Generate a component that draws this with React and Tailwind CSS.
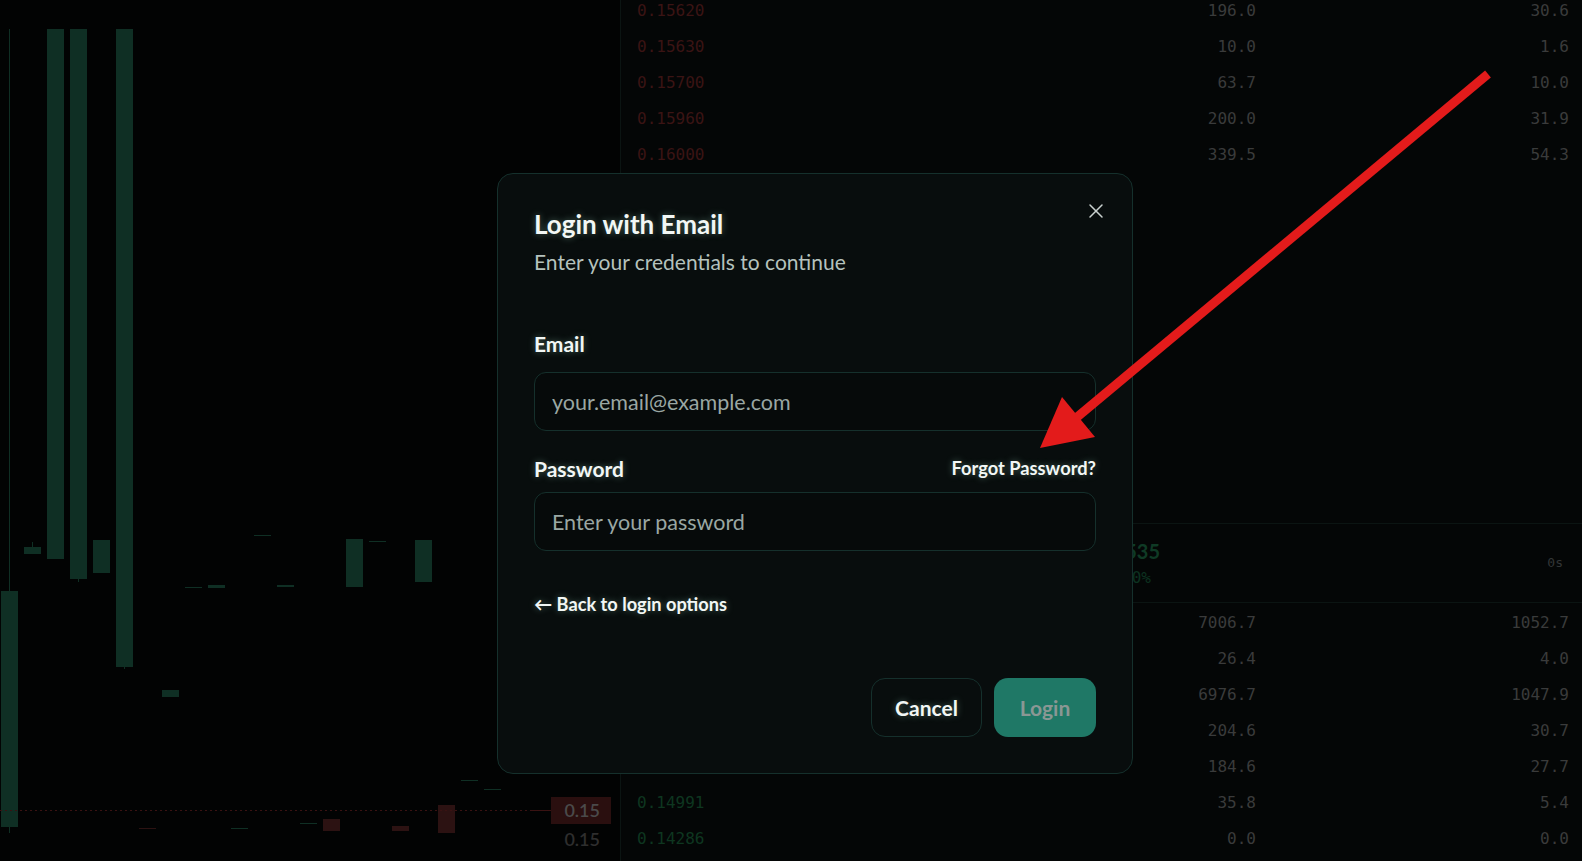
import React from 'react';
import { X } from 'lucide-react';

const asks = [
  ['0.15620', '196.0', '30.6'],
  ['0.15630', '10.0', '1.6'],
  ['0.15700', '63.7', '10.0'],
  ['0.15960', '200.0', '31.9'],
  ['0.16000', '339.5', '54.3'],
];

const bids = [
  ['0.15500', '7006.7', '1052.7'],
  ['0.15400', '26.4', '4.0'],
  ['0.15300', '6976.7', '1047.9'],
  ['0.15200', '204.6', '30.7'],
  ['0.15100', '184.6', '27.7'],
  ['0.14991', '35.8', '5.4'],
  ['0.14286', '0.0', '0.0'],
];

// [x, top, bottom, up, wickTop, wickBottom]
const candles = [
  [1, 591, 827, true, 29, 833],
  [24, 547, 554, true, 542, 554],
  [47, 29, 559, true],
  [70, 29, 579, true, 29, 582],
  [93, 540, 573, true],
  [116, 29, 667, true, 29, 669],
  [139, 828, 829, false],
  [162, 690, 697, true],
  [185, 587, 588, true],
  [208, 585, 588, true],
  [231, 828, 829, true],
  [254, 535, 536, true],
  [277, 585, 587, true],
  [300, 823, 824, true],
  [323, 819, 831, false],
  [346, 539, 587, true],
  [369, 541, 542, true],
  [392, 826, 831, false],
  [415, 540, 582, true],
  [438, 805, 833, false],
  [461, 780, 781, true],
  [484, 789, 790, true],
];

const glow = '[text-shadow:0_0_7px_rgba(190,255,225,0.35)]';

function Chart() {
  return (
    <svg width="620" height="861" viewBox="0 0 620 861" className="block">
      {candles.map(([x, t, b, up, wt, wb], i) => {
        const c = up ? '#0f2f24' : '#2c1212';
        return (
          <g key={i}>
            {wt !== undefined && <rect x={x + 8} y={wt} width="1" height={wb - wt} fill={c} />}
            <rect x={x} y={t} width="17" height={Math.max(b - t, 1)} fill={c} />
          </g>
        );
      })}
      <line x1="0" y1="810.5" x2="530" y2="810.5" stroke="#3a1212" strokeDasharray="2 3" />
      <line x1="530" y1="810.5" x2="551" y2="810.5" stroke="#3a1212" />
      <rect x="551" y="797" width="60" height="27" fill="#2a0f0f" />
      <text x="600" y="817" textAnchor="end" fill="#4a4a4a" fontSize="18" fontWeight="600" fontFamily="Lato, sans-serif">0.15</text>
      <text x="600" y="846" textAnchor="end" fill="#2e2e2e" fontSize="18" fontWeight="600" fontFamily="Lato, sans-serif">0.15</text>
    </svg>
  );
}

function BookRow({ row, priceClass }) {
  return (
    <div className="flex h-9 items-center pl-4 pr-[13px]">
      <span className={`w-[300px] ${priceClass}`}>{row[0]}</span>
      <span className="w-[319px] text-right text-[#3a3b3b]">{row[1]}</span>
      <span className="flex-1 text-right text-[#3a3b3b]">{row[2]}</span>
    </div>
  );
}

function OrderBook() {
  return (
    <div className="flex h-full flex-1 flex-col border-l border-[#0b1412] bg-[#040606] font-['DejaVu_Sans_Mono',monospace] text-[16px]">
      <div className="h-[524px] border-b border-[#0b1412]">
        <div className="-mt-[7px]">
          {asks.map((r) => (
            <BookRow key={r[0]} row={r} priceClass="text-[#3b1414]" />
          ))}
        </div>
      </div>
      <div className="flex h-[79px] items-center border-b border-[#0b1412] pl-4 pr-[19px]">
        <div className="w-[523px] text-right">
          <div className="font-['Lato',sans-serif] text-[20px] leading-6 font-bold text-[#0f3a25]">0.15535</div>
          <div className="mt-[5px] pr-[9px] text-[16px] leading-5 text-[#0c3220]">-0.40%</div>
        </div>
        <div className="flex-1 text-right text-[13px] text-[#333636]">0s</div>
      </div>
      <div className="pt-[2px]">
        {bids.map((r) => (
          <BookRow key={r[0]} row={r} priceClass="text-[#0e3620]" />
        ))}
      </div>
    </div>
  );
}

function LoginModal() {
  return (
    <div className="absolute left-[497px] top-[173px] w-[636px] rounded-2xl border border-[#15302c] bg-[#080d0d] px-9 pt-[34px] pb-9 font-['Lato',sans-serif] text-[#f2f7f5]">
      <button className="absolute right-[24px] top-[25px] text-[#c9d1cf]" aria-label="Close">
        <X size={24} strokeWidth={1.5} />
      </button>
      <h2 className={`text-[26px] leading-8 font-bold ${glow}`}>Login with Email</h2>
      <p className="mt-2 text-[21px] leading-7 text-[#b5c2bd]">Enter your credentials to continue</p>

      <label className={`mt-[54px] block text-[21px] leading-7 font-bold ${glow}`}>Email</label>
      <input
        type="email"
        placeholder="your.email@example.com"
        className="mt-[14px] block h-[59px] w-full rounded-xl border border-[#15302c] bg-[#060a0a] px-[17px] text-[21.5px] text-white outline-none placeholder:text-[#9aa7a3]"
      />

      <div className="mt-6 flex h-7 items-center justify-between">
        <label className={`text-[21px] font-bold ${glow}`}>Password</label>
        <button className={`text-[18.3px] font-bold ${glow}`}>Forgot Password?</button>
      </div>
      <input
        type="password"
        placeholder="Enter your password"
        className="mt-[9px] block h-[59px] w-full rounded-xl border border-[#15302c] bg-[#060a0a] px-[17px] text-[21.5px] text-white outline-none placeholder:text-[#9aa7a3]"
      />

      <button className={`mt-10 block h-6 text-[18.2px] font-bold ${glow}`}>← Back to login options</button>

      <div className="mt-[63px] flex justify-end gap-3">
        <button className={`h-[59px] w-[111px] rounded-[14px] border border-[#15302c] text-[21px] font-bold ${glow}`}>
          Cancel
        </button>
        <button className="h-[59px] w-[102px] rounded-[14px] bg-[#1f7866] text-[21px] font-bold text-[#8a9794]">
          Login
        </button>
      </div>
    </div>
  );
}

function Arrow() {
  return (
    <svg className="pointer-events-none absolute inset-0" width="1582" height="861" viewBox="0 0 1582 861">
      <line x1="1488" y1="74" x2="1076" y2="418" stroke="#e31b1b" strokeWidth="9" />
      <polygon points="1040,448 1062,397 1095,437" fill="#e31b1b" />
    </svg>
  );
}

export default function App() {
  return (
    <div className="relative h-[861px] w-full overflow-hidden bg-[#020303]">
      <div className="flex h-full">
        <div className="h-full w-[620px] shrink-0">
          <Chart />
        </div>
        <OrderBook />
      </div>
      <LoginModal />
      <Arrow />
    </div>
  );
}
